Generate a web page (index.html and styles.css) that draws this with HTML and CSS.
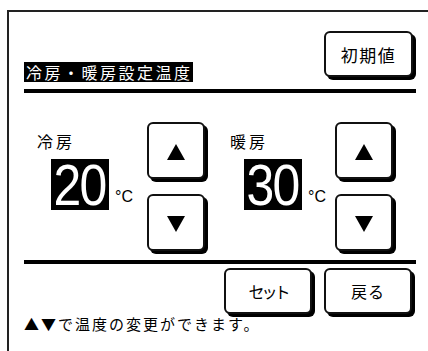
FILE: index.html
```html
<!DOCTYPE html>
<html lang="ja">
<head>
  <meta charset="UTF-8">
  <title>冷房・暖房設定温度</title>
  <link rel="stylesheet" href="styles.css">
</head>
<body>

<div class="screen">
  <header class="head">
    <h1 class="title">冷房・暖房設定温度</h1>
    <button class="key key-reset">初期値</button>
  </header>
  <hr class="rule">

  <main class="temps">
    <section class="zone zone-cool">
      <div class="reading">
        <div class="label">冷房</div>
        <div class="value"><span class="num"><span class="digits">20</span></span><span class="unit">°C</span></div>
      </div>
      <div class="steppers">
        <button class="key step"><svg width="18" height="16" viewBox="0 0 18 16"><polygon points="9,0 18,16 0,16"/></svg></button>
        <button class="key step"><svg width="18" height="16" viewBox="0 0 18 16"><polygon points="0,0 18,0 9,16"/></svg></button>
      </div>
    </section>

    <section class="zone zone-heat">
      <div class="reading">
        <div class="label">暖房</div>
        <div class="value"><span class="num"><span class="digits">30</span></span><span class="unit">°C</span></div>
      </div>
      <div class="steppers">
        <button class="key step"><svg width="18" height="16" viewBox="0 0 18 16"><polygon points="9,0 18,16 0,16"/></svg></button>
        <button class="key step"><svg width="18" height="16" viewBox="0 0 18 16"><polygon points="0,0 18,0 9,16"/></svg></button>
      </div>
    </section>
  </main>

  <hr class="rule rule-low">

  <div class="actions">
    <button class="key key-wide key-set">セット</button>
    <button class="key key-wide">戻る</button>
  </div>
  <p class="hint">▲▼で温度の変更ができます。</p>
</div>

</body>
</html>
```

FILE: styles.css
```css
html, body {
  margin: 0;
  overflow: hidden;
  background: #fff;
}
body {
  font-family: "Noto Sans CJK JP", sans-serif;
  color: #000;
}
.screen {
  box-sizing: border-box;
  margin: 10px 0 0 7px;
  height: 341px;
  padding: 0 12px 0 15px;
  border-top: 2px solid #222;
  border-left: 2px solid #222;
}
.head {
  display: flex;
  justify-content: space-between;
  align-items: flex-end;
  padding-top: 19px;
}
.title {
  margin: 0;
  height: 20px;
  padding-left: 2px;
  background: #000;
  color: #fff;
  font-size: 16px;
  font-weight: normal;
  line-height: 20px;
  letter-spacing: 2.5px;
}
.key {
  display: flex;
  align-items: center;
  justify-content: center;
  padding: 0;
  background: #fff;
  border: 2px solid #111;
  border-radius: 6px;
  box-shadow: 3px 3px 0 #000;
  font-family: inherit;
  color: #000;
}
.key-reset {
  width: 89px;
  height: 46px;
  margin: 0 3px 5px 0;
  font-size: 17px;
  letter-spacing: 1.5px;
}
.rule {
  margin: 7px 0 0;
  height: 4px;
  border: 0;
  background: #000;
}
.rule-low {
  margin-top: 0;
}
.temps {
  display: flex;
  height: 167px;
  padding-left: 13px;
}
.zone {
  display: flex;
}
.zone-heat {
  margin-left: 25px;
}
.reading {
  width: 110px;
  padding-top: 40px;
}
.zone-heat .reading {
  width: 105px;
}
.label {
  font-size: 16px;
  line-height: 16px;
  letter-spacing: 3px;
}
.value {
  display: flex;
  align-items: flex-end;
  gap: 6px;
  margin: 10px 0 0 14px;
}
.num {
  display: flex;
  justify-content: center;
  width: 58px;
  height: 51px;
  background: #000;
  color: #fff;
  font-family: "Liberation Sans", sans-serif;
  font-size: 58px;
  line-height: 51px;
}
.digits {
  display: block;
  letter-spacing: -2px;
  text-indent: -2px;
  transform: scaleX(0.86);
}
.unit {
  margin-bottom: 5px;
  font-family: "Liberation Sans", sans-serif;
  font-size: 16px;
  line-height: 16px;
}
.steppers {
  display: flex;
  flex-direction: column;
  gap: 15px;
  padding-top: 29px;
}
.step {
  width: 58px;
  height: 57px;
  padding-top: 2px;
}
.actions {
  display: flex;
  justify-content: flex-end;
  gap: 12px;
  padding: 4px 4px 0 0;
}
.key-wide {
  width: 88px;
  height: 46px;
  font-size: 16px;
  letter-spacing: 1px;
}
.key-set {
  letter-spacing: -3px;
}
.hint {
  margin: 2px 0 0;
  font-size: 15px;
  line-height: 16px;
  letter-spacing: 2px;
}
```
